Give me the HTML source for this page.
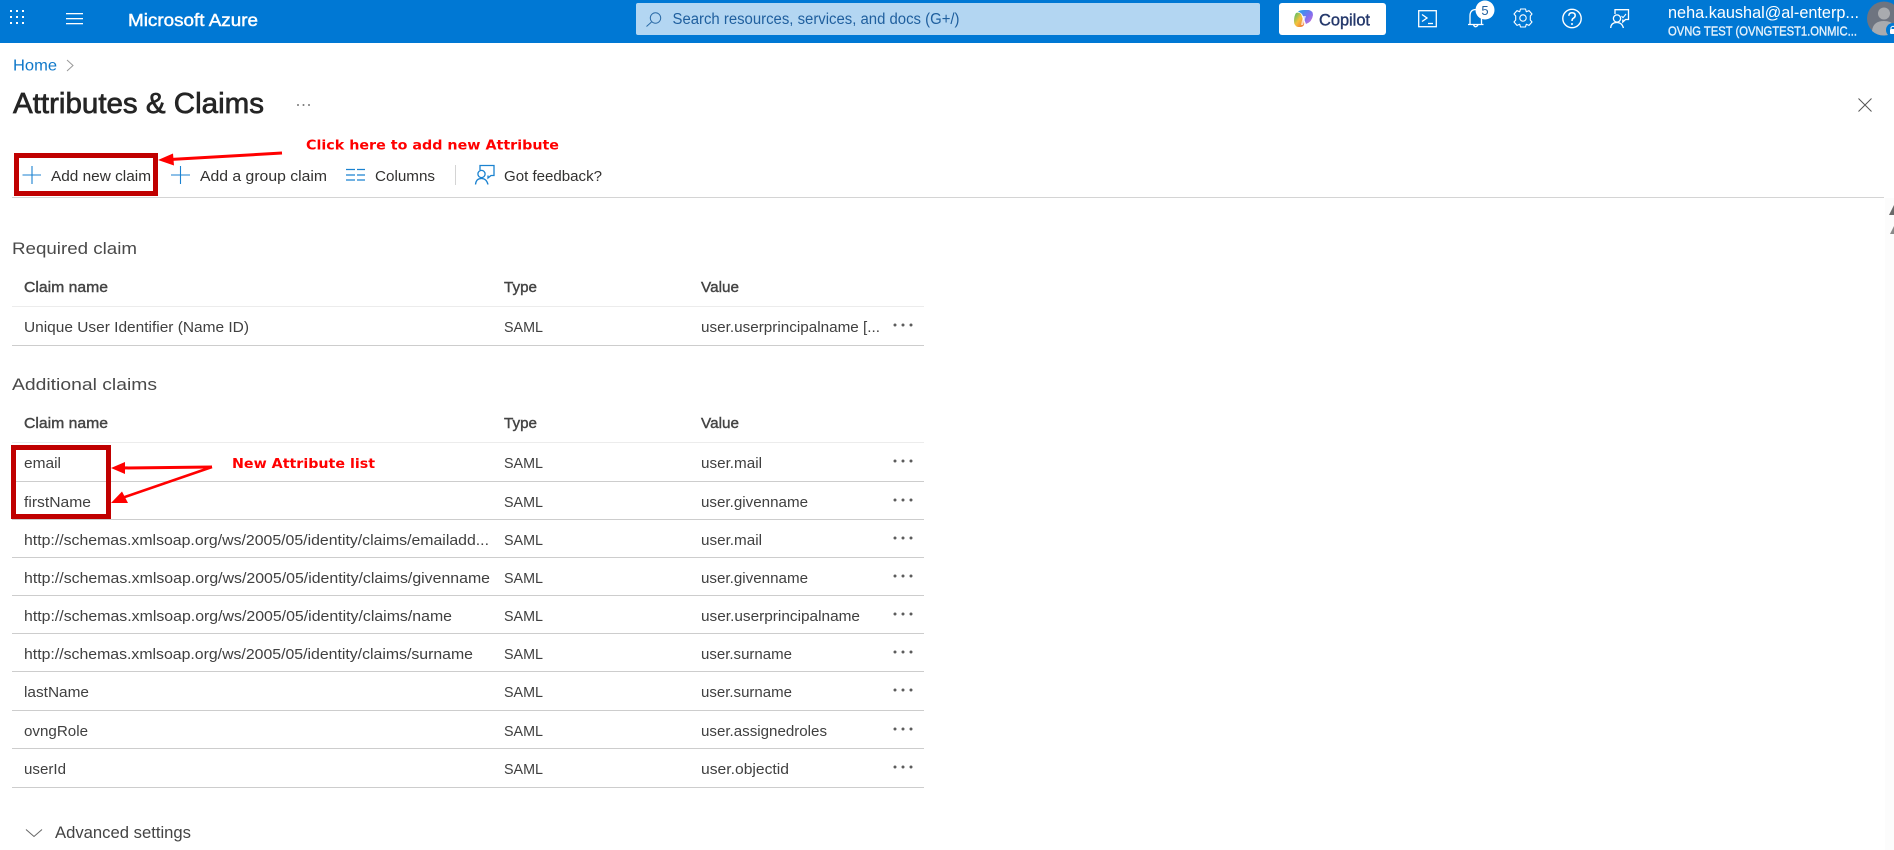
<!DOCTYPE html>
<html lang="en">
<head>
<meta charset="utf-8">
<title>Attributes &amp; Claims - Microsoft Azure</title>
<style>
html,body{margin:0;padding:0;background:#fff;width:1894px;height:850px;overflow:hidden}
svg{display:block;position:absolute;left:0;top:0}
text{font-family:"Liberation Sans",sans-serif;dominant-baseline:auto}
.r{font-size:15px;fill:#404040}
.h{font-size:15px;fill:#444;stroke:#444;stroke-width:.4px}
.t{font-size:17px;fill:#4a4a4a}
.b{font-size:15px;fill:#323130}
.a{font-family:"DejaVu Sans",sans-serif;font-weight:bold;font-size:13.5px;fill:#ff0000}
.l{stroke:#cdcdcd;stroke-width:1}
.lh{stroke:#ececec;stroke-width:1}
.d circle{fill:#5c5c5c}
</style>
</head>
<body>
<svg width="1894" height="850" viewBox="0 0 1894 850" xmlns="http://www.w3.org/2000/svg">
<defs>
<g id="dots" class="d"><circle cx="0" cy="0" r="1.5"/><circle cx="8" cy="0" r="1.5"/><circle cx="16" cy="0" r="1.5"/></g>
<linearGradient id="cp1" x1="0" y1="0" x2="1" y2="1"><stop offset="0" stop-color="#1aa5e8"/><stop offset=".55" stop-color="#7a6ff0"/><stop offset="1" stop-color="#d86fd0"/></linearGradient>
<linearGradient id="cp2" x1="0" y1="0" x2="1" y2="1"><stop offset="0" stop-color="#3fbf6f"/><stop offset=".5" stop-color="#f5c23c"/><stop offset="1" stop-color="#f0693a"/></linearGradient>
</defs>

<!-- top bar -->
<rect x="0" y="0" width="1894" height="43" fill="#0078d4"/>
<g fill="#fff">
<rect x="10" y="10" width="2" height="2"/><rect x="16" y="10" width="2" height="2"/><rect x="22" y="10" width="2" height="2"/>
<rect x="10" y="16" width="2" height="2"/><rect x="16" y="16" width="2" height="2"/><rect x="22" y="16" width="2" height="2"/>
<rect x="10" y="22" width="2" height="2"/><rect x="16" y="22" width="2" height="2"/><rect x="22" y="22" width="2" height="2"/>
<rect x="66" y="13" width="17" height="1.3"/><rect x="66" y="18" width="17" height="1.3"/><rect x="66" y="23" width="17" height="1.3"/>
</g>
<text x="128" y="26" font-size="17.5" fill="#fff" stroke="#fff" stroke-width=".45" textLength="130" lengthAdjust="spacingAndGlyphs">Microsoft Azure</text>

<rect x="636" y="3" width="624" height="32" rx="2" fill="#b3d6f2"/>
<g fill="none" stroke="#2a6aa6" stroke-width="1">
<circle cx="655.5" cy="18" r="5.2"/><path d="M651.5 22 L646.5 26.5"/>
</g>
<text x="672.5" y="24" font-size="15.5" fill="#1f5f9e" textLength="287" lengthAdjust="spacingAndGlyphs">Search resources, services, and docs (G+/)</text>

<rect x="1279" y="3" width="107" height="32" rx="3" fill="#fff"/>
<path d="M1298 11.5 Q1300 10 1304 10 L1309 10 Q1313 11 1313 15 Q1312 22 1306 24 L1303 16 Q1302 13 1298 11.5Z" fill="url(#cp1)"/>
<path d="M1296 13 Q1299 12 1301 14 L1304 22 Q1305 26 1301 27 L1298 27 Q1294 26 1294 21 Q1294 16 1296 13Z" fill="url(#cp2)"/>
<path d="M1303 16 L1306 16 L1303 25 L1301 25Z" fill="#fff" opacity=".7"/>
<text x="1319" y="25.5" font-size="16.5" fill="#24386b" stroke="#24386b" stroke-width=".4" textLength="51" lengthAdjust="spacingAndGlyphs">Copilot</text>

<g fill="none" stroke="#fff" stroke-width="1.3">
<!-- terminal -->
<rect x="1418.7" y="10.7" width="17.6" height="16"/>
<path d="M1422 14.5 L1427 18 L1422 21.5"/><path d="M1428 23.5 L1433 23.5"/>
<!-- bell -->
<path d="M1470 24 L1470 16 Q1470 9.5 1476 9.5 Q1481.5 9.5 1481.5 16 L1481.5 24 M1468 24.5 L1483.5 24.5 M1473.5 25 Q1475.5 28.5 1478 25"/>
<!-- gear -->
<path d="M1520.5 9 L1525.5 9 L1526.3 11.7 L1529 10.6 L1532 14 L1530.3 16 L1530.3 20 L1532 22 L1529 25.4 L1526.3 24.3 L1525.5 27 L1520.5 27 L1519.7 24.3 L1517 25.4 L1514 22 L1515.7 20 L1515.7 16 L1514 14 L1517 10.6 L1519.7 11.7Z" stroke-linejoin="round" stroke-width="1.1"/>
<circle cx="1523" cy="18" r="3.2" stroke-width="1.1"/>
<!-- help -->
<circle cx="1572" cy="18.5" r="9.2" stroke-width="1.4"/>
<path d="M1568.8 15.8 Q1569 12.8 1572 12.8 Q1575.2 12.8 1575.2 15.5 Q1575.2 17.3 1573.3 18.3 Q1572 19 1572 21" stroke-width="1.5"/>
<!-- feedback -->
<path d="M1615 14 L1615 9.7 L1628.5 9.7 L1628.5 19.5 L1625.5 19.5 L1622.8 22 L1622.8 19.5"/>
<circle cx="1617" cy="18.5" r="3.6"/>
<path d="M1610.7 28 Q1611 22.5 1617 22.5 Q1622 22.5 1623.4 28"/>
<path d="M1621.5 16 L1623 17.7 L1626 14" stroke-width="1"/>
</g>
<circle cx="1572" cy="24" r="1" fill="#fff"/>
<circle cx="1485" cy="10" r="9.5" fill="#fff"/>
<text x="1485" y="15" font-size="13" fill="#1f5f9e" text-anchor="middle">5</text>

<text x="1668" y="18" font-size="16.5" fill="#fff" textLength="191" lengthAdjust="spacingAndGlyphs">neha.kaushal@al-enterp...</text>
<text x="1668" y="35.5" font-size="13" fill="#e3f0fb" stroke="#e3f0fb" stroke-width=".4" textLength="189" lengthAdjust="spacingAndGlyphs">OVNG TEST (OVNGTEST1.ONMIC...</text>

<circle cx="1884" cy="18.5" r="17" fill="#6e7480"/>
<circle cx="1884" cy="13.5" r="6" fill="#a9abaf"/>
<path d="M1872 31 Q1873 21 1884 21 Q1895 21 1896 31 Q1890 35.5 1884 35.5 Q1877 35.5 1872 31Z" fill="#a9abaf"/>
<circle cx="1893" cy="30" r="7" fill="#0078d4"/>
<rect x="1890" y="29" width="6" height="5" rx="1" fill="#fff"/>
<path d="M1891 29 V27.5 Q1893 25 1895 27.5 V29" stroke="#fff" fill="none"/>

<!-- breadcrumb & title -->
<text x="13" y="70.5" font-size="16" fill="#0f78c9" textLength="44" lengthAdjust="spacingAndGlyphs">Home</text>
<path d="M67 60 L73 65.5 L67 71" fill="none" stroke="#999" stroke-width="1"/>
<text x="13" y="113" font-size="29" fill="#252525" stroke="#252525" stroke-width=".7" textLength="251" lengthAdjust="spacingAndGlyphs">Attributes &amp; Claims</text>
<g fill="#777"><circle cx="298" cy="105" r="1"/><circle cx="303.5" cy="105" r="1"/><circle cx="309" cy="105" r="1"/></g>
<path d="M1858.5 98.5 L1871.5 111.5 M1871.5 98.5 L1858.5 111.5" stroke="#555" stroke-width="1" fill="none"/>

<!-- command bar -->
<g stroke="#1b82d0" stroke-width="1.1" fill="none">
<path d="M22.5 175 H41 M32 166 V184"/>
<path d="M171 175 H190 M180.5 166 V184"/>
<path d="M346 169.5 H355 M346 175 H355 M346 180 H355 M357 169.5 H365 M357 175 H365 M357 180 H365" stroke-width="1.2"/>
<path d="M480 170 L480 165.5 L494 165.5 L494 175.5 L491 175.5 L488 178 L488 175.5" stroke-width="1.3"/>
<circle cx="481.5" cy="174" r="3.6" stroke-width="1.3"/>
<path d="M475.5 184.5 Q476 178.5 481.5 178.5 Q486.5 178.5 488 184.5" stroke-width="1.3"/>
</g>
<text class="b" x="51" y="181" textLength="100" lengthAdjust="spacingAndGlyphs">Add new claim</text>
<text class="b" x="200" y="181" textLength="127" lengthAdjust="spacingAndGlyphs">Add a group claim</text>
<text class="b" x="375" y="181" textLength="60" lengthAdjust="spacingAndGlyphs">Columns</text>
<rect x="455" y="165" width="1" height="20" fill="#d4d4d4"/>
<text class="b" x="504" y="181" textLength="98" lengthAdjust="spacingAndGlyphs">Got feedback?</text>
<rect x="12" y="197" width="1872" height="1" fill="#d4d4d4"/>

<!-- scrollbar -->
<rect x="1885" y="198" width="9" height="652" fill="#fcfcfc"/>
<path d="M1894 205 L1889 215 L1894 215Z" fill="#6a6a6a"/>
<path d="M1894 226 L1890 234 L1894 234Z" fill="#8a8a8a"/>

<!-- required claim -->
<text class="t" x="12" y="254" textLength="125" lengthAdjust="spacingAndGlyphs">Required claim</text>
<text class="h" x="24" y="292" textLength="84" lengthAdjust="spacingAndGlyphs">Claim name</text>
<text class="h" x="504" y="292" textLength="33" lengthAdjust="spacingAndGlyphs">Type</text>
<text class="h" x="701" y="292" textLength="38" lengthAdjust="spacingAndGlyphs">Value</text>
<line class="lh" x1="12" x2="924" y1="306.5" y2="306.5"/>
<text class="r" x="24" y="332" textLength="225" lengthAdjust="spacingAndGlyphs">Unique User Identifier (Name ID)</text>
<text class="r" x="504" y="332" textLength="39" lengthAdjust="spacingAndGlyphs">SAML</text>
<text class="r" x="701" y="332" textLength="179" lengthAdjust="spacingAndGlyphs">user.userprincipalname [...</text>
<use href="#dots" x="895" y="325"/>
<line class="l" x1="12" x2="924" y1="345.5" y2="345.5"/>

<!-- additional claims -->
<text class="t" x="12" y="390" textLength="145" lengthAdjust="spacingAndGlyphs">Additional claims</text>
<text class="h" x="24" y="428" textLength="84" lengthAdjust="spacingAndGlyphs">Claim name</text>
<text class="h" x="504" y="428" textLength="33" lengthAdjust="spacingAndGlyphs">Type</text>
<text class="h" x="701" y="428" textLength="38" lengthAdjust="spacingAndGlyphs">Value</text>
<line class="lh" x1="12" x2="924" y1="442.5" y2="442.5"/>

<text class="r" x="24" y="468" textLength="37" lengthAdjust="spacingAndGlyphs">email</text>
<text class="r" x="504" y="468" textLength="39" lengthAdjust="spacingAndGlyphs">SAML</text>
<text class="r" x="701" y="468" textLength="61" lengthAdjust="spacingAndGlyphs">user.mail</text>
<use href="#dots" x="895" y="461"/>
<line class="l" x1="12" x2="924" y1="481.5" y2="481.5"/>

<text class="r" x="24" y="507" textLength="67" lengthAdjust="spacingAndGlyphs">firstName</text>
<text class="r" x="504" y="507" textLength="39" lengthAdjust="spacingAndGlyphs">SAML</text>
<text class="r" x="701" y="507" textLength="107" lengthAdjust="spacingAndGlyphs">user.givenname</text>
<use href="#dots" x="895" y="500"/>
<line class="l" x1="12" x2="924" y1="519.5" y2="519.5"/>

<text class="r" x="24" y="545" textLength="465" lengthAdjust="spacingAndGlyphs">http://schemas.xmlsoap.org/ws/2005/05/identity/claims/emailadd...</text>
<text class="r" x="504" y="545" textLength="39" lengthAdjust="spacingAndGlyphs">SAML</text>
<text class="r" x="701" y="545" textLength="61" lengthAdjust="spacingAndGlyphs">user.mail</text>
<use href="#dots" x="895" y="538"/>
<line class="l" x1="12" x2="924" y1="557.5" y2="557.5"/>

<text class="r" x="24" y="583" textLength="466" lengthAdjust="spacingAndGlyphs">http://schemas.xmlsoap.org/ws/2005/05/identity/claims/givenname</text>
<text class="r" x="504" y="583" textLength="39" lengthAdjust="spacingAndGlyphs">SAML</text>
<text class="r" x="701" y="583" textLength="107" lengthAdjust="spacingAndGlyphs">user.givenname</text>
<use href="#dots" x="895" y="576"/>
<line class="l" x1="12" x2="924" y1="595.5" y2="595.5"/>

<text class="r" x="24" y="621" textLength="428" lengthAdjust="spacingAndGlyphs">http://schemas.xmlsoap.org/ws/2005/05/identity/claims/name</text>
<text class="r" x="504" y="621" textLength="39" lengthAdjust="spacingAndGlyphs">SAML</text>
<text class="r" x="701" y="621" textLength="159" lengthAdjust="spacingAndGlyphs">user.userprincipalname</text>
<use href="#dots" x="895" y="614"/>
<line class="l" x1="12" x2="924" y1="633.5" y2="633.5"/>

<text class="r" x="24" y="659" textLength="449" lengthAdjust="spacingAndGlyphs">http://schemas.xmlsoap.org/ws/2005/05/identity/claims/surname</text>
<text class="r" x="504" y="659" textLength="39" lengthAdjust="spacingAndGlyphs">SAML</text>
<text class="r" x="701" y="659" textLength="91" lengthAdjust="spacingAndGlyphs">user.surname</text>
<use href="#dots" x="895" y="652"/>
<line class="l" x1="12" x2="924" y1="671.5" y2="671.5"/>

<text class="r" x="24" y="697" textLength="65" lengthAdjust="spacingAndGlyphs">lastName</text>
<text class="r" x="504" y="697" textLength="39" lengthAdjust="spacingAndGlyphs">SAML</text>
<text class="r" x="701" y="697" textLength="91" lengthAdjust="spacingAndGlyphs">user.surname</text>
<use href="#dots" x="895" y="690"/>
<line class="l" x1="12" x2="924" y1="710.5" y2="710.5"/>

<text class="r" x="24" y="736" textLength="64" lengthAdjust="spacingAndGlyphs">ovngRole</text>
<text class="r" x="504" y="736" textLength="39" lengthAdjust="spacingAndGlyphs">SAML</text>
<text class="r" x="701" y="736" textLength="126" lengthAdjust="spacingAndGlyphs">user.assignedroles</text>
<use href="#dots" x="895" y="729"/>
<line class="l" x1="12" x2="924" y1="748.5" y2="748.5"/>

<text class="r" x="24" y="774" textLength="42" lengthAdjust="spacingAndGlyphs">userId</text>
<text class="r" x="504" y="774" textLength="39" lengthAdjust="spacingAndGlyphs">SAML</text>
<text class="r" x="701" y="774" textLength="88" lengthAdjust="spacingAndGlyphs">user.objectid</text>
<use href="#dots" x="895" y="767"/>
<line class="l" x1="12" x2="924" y1="787.5" y2="787.5"/>

<path d="M26 829.5 L34 836.5 L42 829.5" fill="none" stroke="#666" stroke-width="1"/>
<text x="55" y="838" font-size="16.5" fill="#444" textLength="136" lengthAdjust="spacingAndGlyphs">Advanced settings</text>

<!-- annotations -->
<rect x="16.5" y="155.5" width="139" height="38" fill="none" stroke="#c00000" stroke-width="5"/>
<rect x="13.5" y="447.5" width="95" height="69" fill="none" stroke="#c00000" stroke-width="5"/>
<text class="a" x="306" y="149.5" textLength="253" lengthAdjust="spacingAndGlyphs">Click here to add new Attribute</text>
<text class="a" x="232" y="468" textLength="143" lengthAdjust="spacingAndGlyphs">New Attribute list</text>
<path d="M282 153 L170 159.5" stroke="#f00" stroke-width="3" fill="none"/>
<path d="M158 160 L173 153.5 L174 165.5Z" fill="#f00"/>
<path d="M212 467 L122 468" stroke="#f00" stroke-width="3" fill="none"/>
<path d="M111 468 L125 462 L125 474Z" fill="#f00"/>
<path d="M212 467 L122 498" stroke="#f00" stroke-width="2.6" fill="none"/>
<path d="M111 503 L122 491.5 L128 503Z" fill="#f00"/>
</svg>
</body>
</html>
